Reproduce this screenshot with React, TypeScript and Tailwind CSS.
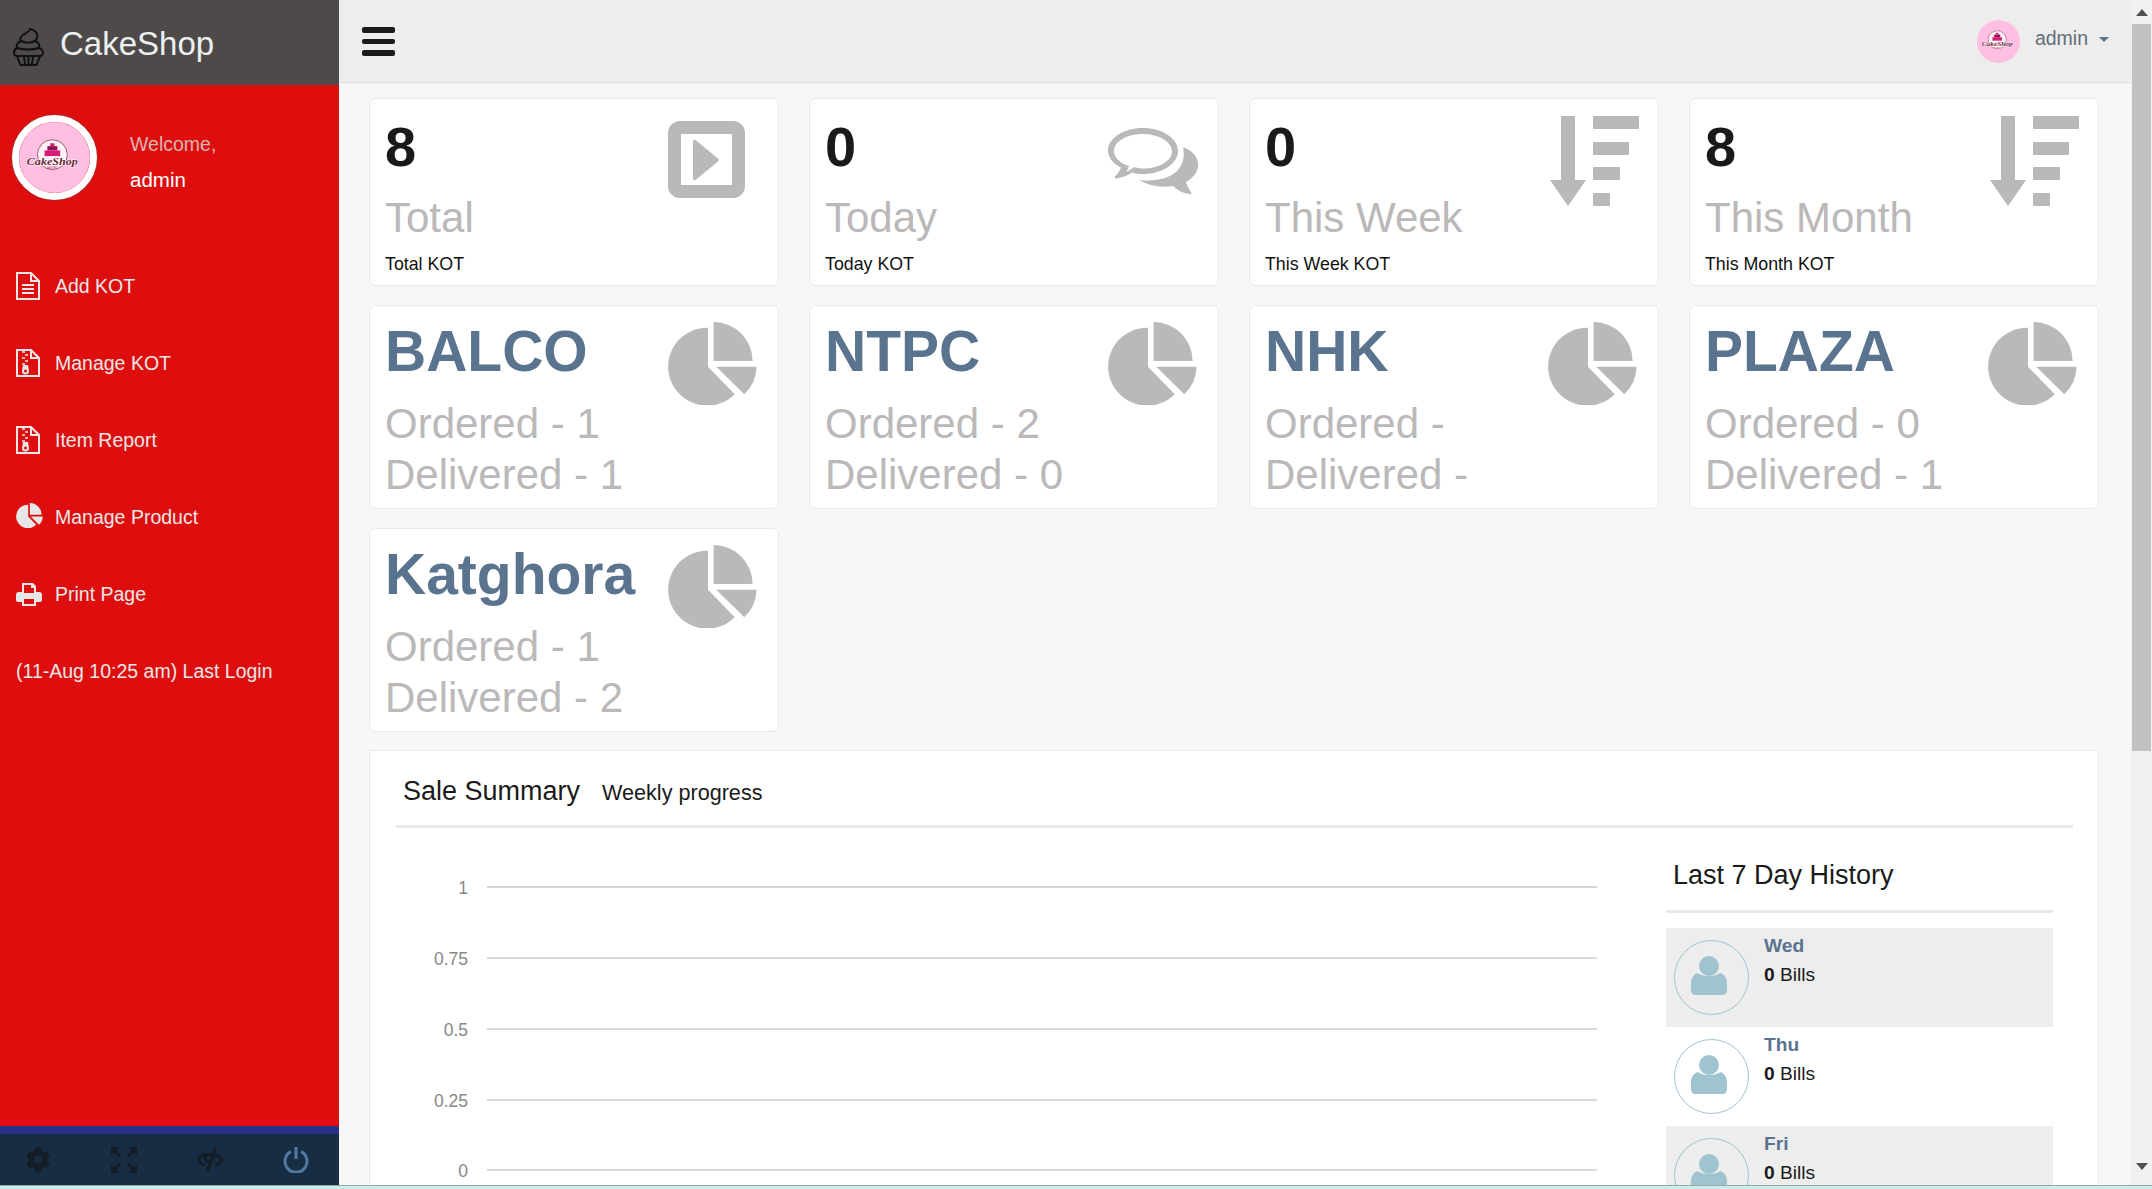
import { FaCog } from "react-icons/fa";

const tiles = [
  { count: "8", label: "Total", sub: "Total KOT", icon: "play" },
  { count: "0", label: "Today", sub: "Today KOT", icon: "comments" },
  { count: "0", label: "This Week", sub: "This Week KOT", icon: "sort" },
  { count: "8", label: "This Month", sub: "This Month KOT", icon: "sort" },
];

const branches = [
  { name: "BALCO", ordered: "1", delivered: "1" },
  { name: "NTPC", ordered: "2", delivered: "0" },
  { name: "NHK", ordered: "", delivered: "" },
  { name: "PLAZA", ordered: "0", delivered: "1" },
  { name: "Katghora", ordered: "1", delivered: "2" },
];

const history = ["Wed", "Thu", "Fri"];
const yAxis = [
  { label: "1", y: 59 },
  { label: "0.75", y: 130 },
  { label: "0.5", y: 201 },
  { label: "0.25", y: 272 },
  { label: "0", y: 342 },
];

const Logo = ({ className }: { className: string }) => (
  <svg viewBox="0 0 100 100" className={className}>
    <circle cx="50" cy="50" r="50" fill="#ffbfe3" />
    <circle cx="47" cy="46" r="21" fill="#fff3f8" stroke="#6b2737" strokeWidth="1" />
    <rect x="44" y="30" width="6" height="4" fill="#d81b74" />
    <rect x="40" y="34" width="14" height="6" fill="#8e1550" />
    <rect x="36" y="40" width="22" height="8" fill="#d81b74" />
    <text x="47" y="60" textAnchor="middle" textLength="72" lengthAdjust="spacingAndGlyphs" fontFamily="Liberation Serif" fontStyle="italic" fontWeight="700" fontSize="16" fill="#6b2737" stroke="#fff" strokeWidth="1.200" paintOrder="stroke">
      CakeShop
    </text>
    <text x="47" y="66" textAnchor="middle" fontFamily="Liberation Sans" fontSize="4" fill="#d81b74">
      BAKERY
    </text>
  </svg>
);

const Cupcake = () => (
  <svg viewBox="0 0 31 38" className="h-[38px] w-[31px] shrink-0 translate-y-[4px]" fill="none" stroke="#111" strokeWidth="2" strokeLinecap="round" strokeLinejoin="round">
    <path d="M17 1c1 3-7 4-9 8-1 2-1 3 0 4-3 1-5 4-4 7" />
    <path d="M17 1c6 1 8 5 7 9-.2 1-1 2-2 3 3 1 5 4 4 7" />
    <path d="M8 13c4 2 10 2 14 0" />
    <path d="M4 20C2 21 1 23 1 25c0 2 2 3 4 3h21c2 0 4-1 4-3 0-2-1-4-4-5-6 2-16 2-22 0z" />
    <path d="M4 28l3 8c0 1 1 1 2 1h13c1 0 2 0 2-1l3-8" />
    <path d="M11 29l1 7M20 29l-1 7M15.500 29v7" />
  </svg>
);

const FileIcon = ({ zip }: { zip?: boolean }) => (
  <svg viewBox="0 0 24 28" className="h-7 w-6 shrink-0 -translate-y-[1px]" fill="none" stroke="#e7e7e7" strokeWidth="2">
    <path d="M1 1h14l8 8v18H1z" />
    <path d="M15 1v8h8" />
    {zip ? (
      <>
        <path d="M9 3h-3M9 6h3M9 9h-3M9 12h3M9 15h-3" strokeWidth="1.500" />
        <path d="M7 16h5l1 6a3.500 3.500 0 1 1-7 0z" fill="#e7e7e7" stroke="none" />
        <circle cx="9.500" cy="22" r="1.500" fill="#de0e0e" stroke="none" />
      </>
    ) : (
      <path d="M6 13h12M6 17h12M6 21h12" />
    )}
  </svg>
);

const PieIcon = ({ className, color }: { className: string; color: string }) => (
  <svg viewBox="0 0 89 83" className={className} fill={color}>
    <path d="M45.600 0A39 39 0 0 1 84.600 39H45.600z" />
    <path d="M40 5.700V44.700L66.700 72.300A39 39 0 1 1 40 5.700z" />
    <path d="M48.300 44.700H88.600A40 40 0 0 1 76.300 72.300z" />
  </svg>
);

const PrintIcon = () => (
  <svg viewBox="0 0 26 23" className="h-[23px] w-[26px] shrink-0" fill="#e7e7e7">
    <path fillRule="evenodd" d="M6 0h11l3 3v6h3c2 0 3 1 3 3v5c0 1-1 2-2 2h-4v4H6v-4H2c-1 0-2-1-2-2v-5c0-2 1-3 3-3h3zM8 2v8h10V5h-3V2zM8 16v5h10v-5z" />
  </svg>
);

const TileIcon = ({ icon }: { icon: string }) => {
  if (icon === "play") {
    return (
      <svg viewBox="0 0 77 77" className="absolute left-[298px] top-[22px] h-[77px] w-[77px]">
        <rect width="77" height="77" rx="12" fill="#bab8b8" />
        <rect x="13" y="13" width="51" height="51" fill="#fff" />
        <path d="M25 21c0-2 2-3 3-1.500l22 18c1 1 1 2 0 3l-22 18c-1 1.500-3 .5-3-1.500z" fill="#bab8b8" />
      </svg>
    );
  }
  if (icon === "comments") {
    return (
      <svg viewBox="0 0 110 85" className="absolute left-[289px] top-[22px] h-[85px] w-[110px]" fill="#bab8b8">
        <path fillRule="evenodd" d="M44 7c19 0 35 10 35 23S63 53 44 53c-4 0-8-.5-11-1.500-4 3-9 5-16 6-1 0-2-1-1-2 3-3 5-6 6-9-8-4-13-10-13-17C9 17 25 7 44 7zm0 6c-16 0-29 7.500-29 17 0 6 5 11 12 14l3 1-1 3c-1 1-1 2-2 3 3-1 5-3 7-4l1-1 2 .5c3 .7 5 1 7 1 16 0 29-7.500 29-17S60 13 44 13z" />
        <path d="M84 26c11 4 16 12 15 20-1 6-5 11-12 15 1 4 3 7 5 10 1 1 0 3-2 2-6-1-12-4-16-8-12 2-24 0-34-6 17 2 31-2 38-9 6-6 8-15 6-24z" />
      </svg>
    );
  }
  return (
    <svg viewBox="0 0 89 90" className="absolute right-[19px] top-[17px] h-[90px] w-[89px]" fill="#bab8b8">
      <path d="M11 0h14v64h11L18 90 0 64h11z" />
      <rect x="43" y="0" width="46" height="13" rx="1" />
      <rect x="43" y="26" width="36" height="13" rx="1" />
      <rect x="43" y="51" width="27" height="13" rx="1" />
      <rect x="43" y="77" width="17" height="13" rx="1" />
    </svg>
  );
};

const Person = () => (
  <svg viewBox="0 0 36 40" className="h-[40px] w-[36px]" fill="#a0c4cf">
    <circle cx="18" cy="10" r="10" />
    <path d="M7 17c3 4 19 4 22 0 4 1 7 5 7 10v7c0 3-2 5-4 5H4c-2 0-4-2-4-5v-7c0-5 3-9 7-10z" />
  </svg>
);

const menu = [
  { label: "Add KOT", icon: <FileIcon /> },
  { label: "Manage KOT", icon: <FileIcon zip /> },
  { label: "Item Report", icon: <FileIcon zip /> },
  { label: "Manage Product", icon: <PieIcon className="h-[25px] w-[27px] shrink-0 -translate-y-[2px]" color="#e7e7e7" /> },
  { label: "Print Page", icon: <PrintIcon /> },
];

const Sidebar = () => (
  <aside className="flex w-[339px] shrink-0 flex-col bg-[#de0e0e]">
    <div className="flex h-[85px] items-center gap-4 bg-[#4d4a49] pl-[13px]">
      <Cupcake />
      <span className="translate-y-[1px] text-[33px] leading-none text-[#ecf0f1]">CakeShop</span>
    </div>
    <div className="flex items-center pl-3 pt-[30px]">
      <div className="h-[85px] w-[85px] rounded-full border-[7px] border-white shadow-[0_0_2px_#555]">
        <Logo className="h-full w-full" />
      </div>
      <div className="ml-[33px] translate-y-[4px]">
        <p className="text-[19.500px] leading-[36px] text-[#d8b4b4]">Welcome,</p>
        <p className="text-[20.500px] leading-[36px] text-white">admin</p>
      </div>
    </div>
    <nav className="mt-[48px] flex flex-col pl-4">
      {menu.map((m) => (
        <div key={m.label} className="flex h-[77px] items-center text-[19.500px] text-[#e7e7e7]">
          <span className="flex w-[39px] justify-start">{m.icon}</span>
          <span>{m.label}</span>
        </div>
      ))}
    </nav>
    <p className="pl-4 text-[19.500px] leading-[76px] text-[#e7e7e7]">(11-Aug 10:25 am) Last Login</p>
    <div className="mt-auto h-2 bg-[#2a3086]" />
    <div className="flex h-[51px] items-center gap-[60px] bg-[#172d44] pl-[25px]">
      <FaCog className="h-[25px] w-[26px] text-[#141d26]" />
      <svg viewBox="0 0 26 26" className="h-[26px] w-[26px]" fill="#141d26" stroke="#141d26">
        <path d="M0 0h9L0 9zM26 0h-9l9 9zM0 26h9l-9-9zM26 26h-9l9-9z" stroke="none" />
        <path d="M3 3l6 6M23 3l-6 6M3 23l6-6M23 23l-6-6" strokeWidth="3" />
      </svg>
      <svg viewBox="0 0 28 26" className="h-[26px] w-[26px]" fill="none" stroke="#141d26" strokeWidth="3">
        <path d="M9 6C6 8 3 10 1 13c2 3 5 5 7 6M20 7c3 2 5 4 7 6-2 3-5 5-8 6" />
        <circle cx="13" cy="11" r="4" />
        <path d="M20 0L11 26" strokeWidth="3.500" />
      </svg>
      <svg viewBox="0 0 26 26" className="h-[26px] w-[26px]" fill="none" stroke="#4f7aa3" strokeWidth="3">
        <path d="M8 4.500a11 11 0 1 0 10 0" />
        <path d="M13 0v12" />
      </svg>
    </div>
  </aside>
);

const Topbar = () => (
  <header className="flex h-[83px] shrink-0 items-center justify-between border-b border-[#d9dee4] bg-[#ededed] pl-[23px] pr-[22px]">
    <div className="flex flex-col gap-[6px]">
      <span className="h-[6px] w-[33px] rounded-[2px] bg-[#1a1a1a]" />
      <span className="h-[5px] w-[33px] rounded-[2px] bg-[#1a1a1a]" />
      <span className="h-[6px] w-[33px] rounded-[2px] bg-[#1a1a1a]" />
    </div>
    <div className="flex items-center">
      <Logo className="h-[43px] w-[43px]" />
      <span className="ml-[15px] -translate-y-[2px] text-[19.500px] text-[#646e7a]">admin</span>
      <span className="ml-[11px] -translate-y-[2px] border-x-[5px] border-t-[5px] border-x-transparent border-t-[#5a738e]" />
    </div>
  </header>
);

const Tile = ({ count, label, sub, icon }: (typeof tiles)[number]) => (
  <div className="relative h-[188px] rounded-[7px] border border-[#e6e9ed] bg-white pl-[15px] pt-[18px]">
    <TileIcon icon={icon} />
    <p className="text-[56px] font-bold leading-[60px] text-[#1a1a1a]">{count}</p>
    <p className="mt-[16px] text-[42px] leading-[50px] text-[#bab8b8]">{label}</p>
    <p className="mt-[9px] text-[17.800px] leading-[24px] text-[#111]">{sub}</p>
  </div>
);

const BranchTile = ({ name, ordered, delivered }: (typeof branches)[number]) => (
  <div className="relative h-[204px] rounded-[7px] border border-[#e6e9ed] bg-white pl-[15px] pt-[15px]">
    <PieIcon className="absolute left-[298px] top-[16px] h-[83px] w-[89px]" color="#bab8b8" />
    <p className="text-[57px] font-bold leading-[60px] text-[#5a738e]">{name}</p>
    <p className="mt-[17px] text-[42px] leading-[51px] text-[#bab8b8]">Ordered - {ordered}</p>
    <p className="text-[42px] leading-[51px] text-[#bab8b8]">Delivered - {delivered}</p>
  </div>
);

const SaleSummary = () => (
  <section className="mt-[18px] border border-[#e6e9ed] bg-white pl-[26px] pr-[25px] pt-[23px]">
    <div className="flex h-[51px] items-start pl-[7px]">
      <h2 className="text-[27px] leading-[34px] text-[#1a1a1a]">Sale Summary</h2>
      <span className="ml-[22px] mt-[2px] text-[21.600px] leading-[34px] text-[#1a1a1a]">Weekly progress</span>
    </div>
    <div className="h-[3px] bg-[#e6e9ed]" />
    <div className="flex">
      <svg viewBox="0 0 1210 361" className="h-[361px] w-[1210px] shrink-0">
        {yAxis.map((t, i) => (
          <g key={t.label}>
            <line x1="91" x2="1201" y1={t.y} y2={t.y} stroke={i === 0 ? "#aaaaaa" : "#cccccc"} strokeWidth={i === 0 ? 1 : 1.500} />
            <text x="72" y={t.y + 7} textAnchor="end" fontFamily="Liberation Sans" fontSize="17.500" fill="#888888">
              {t.label}
            </text>
          </g>
        ))}
      </svg>
      <div className="ml-[60px] w-[387px] shrink-0 pt-[30px]">
        <h3 className="pl-[7px] text-[27px] leading-[34px] text-[#1a1a1a]">Last 7 Day History</h3>
        <div className="mb-[15px] mt-[18px] h-[3px] bg-[#e6e9ed]" />
        {history.map((day, i) => (
          <div key={day} className={`flex h-[99px] items-start pl-2 pt-[12px] ${i % 2 === 0 ? "bg-[#ededed]" : "bg-white"}`}>
            <div className="flex h-[75px] w-[75px] shrink-0 items-center justify-center rounded-full border border-[#a0c4cf] pb-[3px] pr-[5px]">
              <Person />
            </div>
            <div className="ml-[15px] -mt-[9px]">
              <p className="text-[19.200px] font-bold leading-[29px] text-[#5a738e]">{day}</p>
              <p className="text-[19.200px] leading-[29px] text-[#1a1a1a]">
                <b>0</b> Bills
              </p>
            </div>
          </div>
        ))}
      </div>
    </div>
  </section>
);

const Scrollbar = () => (
  <div className="flex w-[21px] shrink-0 flex-col items-center bg-[#f1f1f1]">
    <div className="flex h-[24px] items-center justify-center">
      <span className="border-x-[6px] border-b-[7px] border-x-transparent border-b-[#505050]" />
    </div>
    <div className="h-[727px] w-[19px] bg-[#c1c1c1]" />
    <div className="mb-[7px] mt-auto flex h-[24px] items-center justify-center">
      <span className="border-x-[6px] border-t-[7px] border-x-transparent border-t-[#505050]" />
    </div>
  </div>
);

export default function App() {
  return (
    <div className="flex h-screen flex-col overflow-hidden bg-[#f7f7f7] font-['Liberation_Sans',Arial,sans-serif]">
      <div className="flex min-h-0 flex-1">
        <Sidebar />
        <main className="flex min-w-0 flex-1 flex-col overflow-hidden">
          <Topbar />
          <div className="pl-[30px] pr-[32px] pt-[15px]">
            <div className="grid grid-cols-4 gap-x-[30px] gap-y-[19px]">
              {tiles.map((t) => (
                <Tile key={t.label} {...t} />
              ))}
              {branches.map((b) => (
                <BranchTile key={b.name} {...b} />
              ))}
            </div>
            <SaleSummary />
          </div>
        </main>
        <Scrollbar />
      </div>
      <div className="h-[4px] shrink-0 border-t border-[#9aa8a8] bg-[#c8eeee]" />
    </div>
  );
}
